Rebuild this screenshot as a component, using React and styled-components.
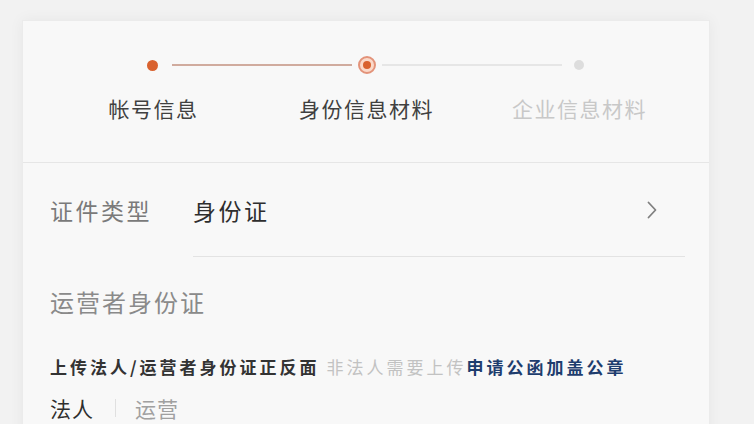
import styled, {createGlobalStyle} from "styled-components";

const GlobalStyle = createGlobalStyle`
   html, body {
      margin: 0;
      padding: 0;
      background: #f2f2f2;
   }
   body {
      font-family: "Noto Sans CJK SC", "Noto Sans", sans-serif;
      overflow: hidden;
   }
`;

const Page = styled.div`
   padding: 20px 44px 0 22px;
   height: 424px;
   box-sizing: border-box;
`;

const Card = styled.div`
   width: 688px;
   height: 420px;
   box-sizing: border-box;
   background: #f8f8f8;
   border: 1px solid #ebebeb;
   border-bottom: none;
   box-shadow: 0 0 14px rgba(0, 0, 0, 0.05);
`;

const StepSection = styled.div`
   padding: 34px 0 39px;
   border-bottom: 1px solid #e6e6e6;
`;

const Track = styled.div`
   display: flex;
   align-items: center;
   height: 20px;
   padding-left: 124px;
`;

const Dot = styled.span`
   flex: none;
   width: ${p => p.size}px;
   height: ${p => p.size}px;
   border-radius: 50%;
   background: ${p => p.color};
`;

const RingDot = styled.span`
   flex: none;
   width: 18px;
   height: 18px;
   box-sizing: border-box;
   border-radius: 50%;
   border: 2px solid #e3937a;
   background: #fbd9c9;
   display: flex;
   align-items: center;
   justify-content: center;

   &::after {
      content: "";
      width: 8px;
      height: 8px;
      border-radius: 50%;
      background: #d9622f;
   }
`;

const Line = styled.span`
   flex: none;
   width: 180px;
   height: 2px;
   margin: 0 ${p => p.right}px 0 ${p => p.left}px;
   background: ${p => p.color};
`;

const Labels = styled.div`
   display: grid;
   grid-template-columns: repeat(3, 213px);
   padding-left: 24px;
   margin-top: 18px;
`;

const StepLabel = styled.div`
   text-align: center;
   font-size: 21px;
   line-height: 30px;
   letter-spacing: 1.5px;
   color: ${p => p.muted ? "#c8c8c8" : "#404040"};
`;

const FieldRow = styled.div`
   display: flex;
   align-items: stretch;
   height: 94px;
   padding-left: 27px;
   padding-right: 24px;
`;

const FieldLabel = styled.div`
   width: 143px;
   display: flex;
   align-items: center;
   font-size: 23px;
   letter-spacing: 2.5px;
   color: #7a7a7a;
`;

const FieldValue = styled.div`
   flex: 1;
   display: flex;
   align-items: center;
   justify-content: space-between;
   padding-right: 26px;
   border-bottom: 1px solid #e3e3e3;
   font-size: 23px;
   letter-spacing: 2.5px;
   color: #2e2e2e;
`;

const SectionTitle = styled.div`
   margin: 28px 0 0 27px;
   font-size: 24px;
   line-height: 34px;
   letter-spacing: 2px;
   color: #8a8a8a;
`;

const Hint = styled.div`
   margin: 36px 0 0 27px;
   font-size: 17px;
   line-height: 24px;
   letter-spacing: 3px;
   white-space: nowrap;
`;

const HintPart = styled.span`
   font-weight: ${p => p.bold ? 700 : 400};
   color: ${p => p.color};
`;

const Tabs = styled.div`
   display: flex;
   align-items: center;
   margin: 15px 0 0 27px;
   font-size: 21px;
   line-height: 28px;
   letter-spacing: 1px;
`;

const Tab = styled.span`
   color: ${p => p.active ? "#2e2e2e" : "#a0a0a0"};
`;

const TabDivider = styled.span`
   width: 1px;
   height: 18px;
   margin: 0 19px 0 21px;
   background: #e0e0e0;
`;

const Chevron = () => (
   <svg width="14" height="22" viewBox="0 0 14 22" fill="none">
      <path d="M3.5 3.5 L10.5 11 L3.5 18.5" stroke="#808080" strokeWidth="1.8" strokeLinecap="round" strokeLinejoin="round"/>
   </svg>
);

const STEPS = [
   {label: "帐号信息"},
   {label: "身份信息材料"},
   {label: "企业信息材料", muted: true},
];

export default function App() {
   return (
      <Page>
         <GlobalStyle/>
         <Card>
            <StepSection>
               <Track>
                  <Dot size={11} color="#d9622f"/>
                  <Line left={14} right={6} color="#d0ab9e"/>
                  <RingDot/>
                  <Line left={6} right={12} color="#e6e6e6"/>
                  <Dot size={10} color="#dddddd"/>
               </Track>
               <Labels>
                  {STEPS.map(s => <StepLabel key={s.label} muted={s.muted}>{s.label}</StepLabel>)}
               </Labels>
            </StepSection>
            <FieldRow>
               <FieldLabel>证件类型</FieldLabel>
               <FieldValue>
                  <span>身份证</span>
                  <Chevron/>
               </FieldValue>
            </FieldRow>
            <SectionTitle>运营者身份证</SectionTitle>
            <Hint>
               <HintPart bold color="#333333">上传法人/运营者身份证正反面</HintPart>
               <HintPart color="#c2c2c2"> 非法人需要上传</HintPart>
               <HintPart bold color="#1e3d6e">申请公函加盖公章</HintPart>
            </Hint>
            <Tabs>
               <Tab active>法人</Tab>
               <TabDivider/>
               <Tab>运营</Tab>
            </Tabs>
         </Card>
      </Page>
   );
}
